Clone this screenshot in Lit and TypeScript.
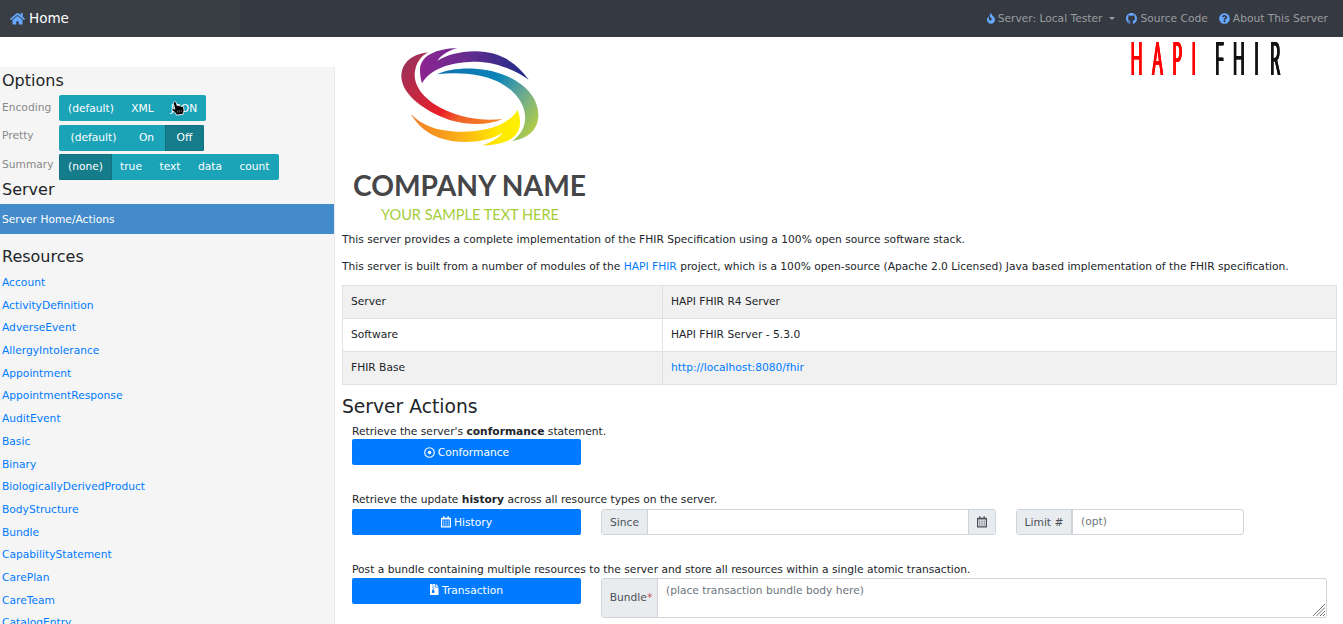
import { LitElement, html, css, svg } from "lit";
import { customElement } from "lit/decorators.js";
import { classMap } from "lit/directives/class-map.js";
import { styleMap } from "lit/directives/style-map.js";

const HOME = "M280.37 148.26L96 300.11V464a16 16 0 0 0 16 16l112.06-.29a16 16 0 0 0 15.92-16V368a16 16 0 0 1 16-16h64a16 16 0 0 1 16 16v95.64a16 16 0 0 0 16 16.05L464 480a16 16 0 0 0 16-16V300L295.67 148.26a12.19 12.19 0 0 0-15.3 0zM571.6 251.47L488 182.56V44.05a12 12 0 0 0-12-12h-56a12 12 0 0 0-12 12v72.61L318.47 43a48 48 0 0 0-61 0L4.34 251.47a12 12 0 0 0-1.6 16.9l25.5 31A12 12 0 0 0 45.15 301l235.22-193.74a12.19 12.19 0 0 1 15.3 0L530.9 301a12 12 0 0 0 16.9-1.6l25.5-31a12 12 0 0 0-1.7-16.93z";
const FIRE = "M216 23.86c0-23.8-30.65-32.77-44.15-13.04C48 191.85 224 200 224 288c0 35.63-29.11 64.46-64.85 63.99-35.17-.45-63.15-29.77-63.15-64.94v-85.51c0-21.7-26.47-32.23-41.43-16.5C27.8 213.16 0 261.33 0 320c0 105.87 86.13 192 192 192s192-86.13 192-192c0-170.29-168-193-168-296.14z";
const GITHUB = "M8 0C3.58 0 0 3.58 0 8c0 3.54 2.29 6.53 5.47 7.59.4.07.55-.17.55-.38 0-.19-.01-.82-.01-1.49-2.01.37-2.53-.49-2.69-.94-.09-.23-.48-.94-.82-1.13-.28-.15-.68-.52-.01-.53.63-.01 1.08.58 1.23.82.72 1.21 1.87.87 2.33.66.07-.52.28-.87.51-1.07-1.78-.2-3.64-.89-3.64-3.95 0-.87.31-1.59.82-2.15-.08-.2-.36-1.02.08-2.12 0 0 .67-.21 2.2.82.64-.18 1.32-.27 2-.27s1.36.09 2 .27c1.53-1.04 2.2-.82 2.2-.82.44 1.1.16 1.92.08 2.12.51.56.82 1.27.82 2.15 0 3.07-1.87 3.75-3.65 3.95.29.25.54.73.54 1.48 0 1.07-.01 1.93-.01 2.2 0 .21.15.46.55.38A8.01 8.01 0 0 0 16 8c0-4.42-3.58-8-8-8z";
const QUESTION = "M504 256c0 136.997-111.043 248-248 248S8 392.997 8 256C8 119.083 119.043 8 256 8s248 111.083 248 248zM262.655 90c-54.497 0-89.255 22.957-116.549 63.758-3.536 5.286-2.353 12.415 2.715 16.258l34.699 26.31c5.205 3.947 12.621 3.008 16.665-2.122 17.864-22.658 30.113-35.797 57.303-35.797 20.429 0 45.698 13.148 45.698 32.958 0 14.976-12.363 22.667-32.534 33.976C247.128 238.528 216 254.941 216 296v4c0 6.627 5.373 12 12 12h56c6.627 0 12-5.373 12-12v-1.333c0-28.462 83.186-29.647 83.186-106.667 0-58.002-60.165-102-116.531-102zM256 338c-25.365 0-46 20.635-46 46 0 25.364 20.635 46 46 46s46-20.636 46-46c0-25.365-20.635-46-46-46z";

const icon = (d: string, box: string, w: number, h: number) =>
  html`<svg class="icon" width=${w} height=${h} viewBox=${box} fill="currentColor"><path d=${d} /></svg>`;

const calendar = html`<svg class="icon" width="10" height="12" viewBox="0 0 10 12" fill="none" stroke="currentColor">
  <path d="M.6 2.300h8.8v8.600H.6z" stroke-width="1.2" stroke-linejoin="round" />
  <path d="M.6 2.700h8.8" stroke-width="1.500" />
  <path d="M2.800.3v2M7.200.3v2" stroke-width="1.300" />
  <path d="M2.200 5.200h1.200M4.400 5.200h1.200M6.600 5.200h1.200M2.200 7.200h1.200M4.400 7.200h1.200M6.600 7.200h1.200M2.200 9.100h1.200M4.400 9.100h1.200M6.600 9.100h1.200" stroke-width="1" />
</svg>`;

const target = html`<svg class="icon" width="11" height="11" viewBox="0 0 11 11">
  <circle cx="5.5" cy="5.5" r="4.8" fill="none" stroke="currentColor" stroke-width="1.1" />
  <circle cx="5.5" cy="5.5" r="1.8" fill="currentColor" />
</svg>`;

const archive = html`<svg class="icon" width="9" height="12" viewBox="0 0 9 12">
  <path fill="currentColor" d="M.5 0h4.8v3.4h3.2v7.1a.6.6 0 0 1-.6.6H.6a.6.6 0 0 1-.6-.6V.5C0 .2.2 0 .5 0zM6 0l2.5 2.700H6z" />
  <path stroke="#007bff" stroke-width=".9" fill="none" d="M2.200 1h1M3.200 2.200h1M2.200 3.400h1M3.200 4.600h1" />
  <path fill="#007bff" d="M2.400 5.400h1.500l.7 2.400a1.400 1.400 0 0 1-2.800 0z" />
</svg>`;

interface Choice { label: string; width: number; active?: boolean }
const OPTIONS: { name: string; height: number; choices: Choice[] }[] = [
  { name: "Encoding", height: 30, choices: [{ label: "(default)", width: 64 }, { label: "XML", width: 39 }, { label: "JSON", width: 44 }] },
  { name: "Pretty", height: 29, choices: [{ label: "(default)", width: 69 }, { label: "On", width: 37 }, { label: "Off", width: 39, active: true }] },
  { name: "Summary", height: 26, choices: [{ label: "(none)", width: 53, active: true }, { label: "true", width: 38 }, { label: "text", width: 40 }, { label: "data", width: 40 }, { label: "count", width: 49 }] },
];

const RESOURCES = [
  "Account", "ActivityDefinition", "AdverseEvent", "AllergyIntolerance", "Appointment",
  "AppointmentResponse", "AuditEvent", "Basic", "Binary", "BiologicallyDerivedProduct",
  "BodyStructure", "Bundle", "CapabilityStatement", "CarePlan", "CareTeam", "CatalogEntry",
];

const base = css`
  * { box-sizing: border-box; }
  a { color: #007bff; text-decoration: none; }
  .icon { flex: none; display: block; }
`;

@customElement("top-bar")
class TopBar extends LitElement {
  static styles = [base, css`
    :host { display: flex; justify-content: space-between; align-items: center; height: 37px; padding: 0 15px 0 10px;
      background: linear-gradient(90deg, #393d44 0 240px, #353941 240px); color: #9a9da0; }
    .brand { display: flex; align-items: center; gap: 4px; font-size: 13.500px; color: #fff; }
    .brand .icon, .link .icon { color: #66a8ff; }
    .links { display: flex; gap: 11px; }
    .link { display: flex; align-items: center; gap: 3px; padding-top: 1px; }
    .link .icon { margin-top: -1px; }
    .caret { margin: -2px 0 0 4px; border: 3.3px solid transparent; border-top-color: currentColor; border-bottom: 0; }
  `];
  render() {
    return html`
      <div class="brand">${icon(HOME, "0 0 576 512", 15, 13.5)}<span>Home</span></div>
      <div class="links">
        <span class="link">${icon(FIRE, "0 0 384 512", 8, 11)}<span>Server: Local Tester</span><span class="caret"></span></span>
        <span class="link">${icon(GITHUB, "0 0 16 16", 11, 11)}<span>Source Code</span></span>
        <span class="link">${icon(QUESTION, "0 0 512 512", 11, 11)}<span>About This Server</span></span>
      </div>`;
  }
}

@customElement("side-nav")
class SideNav extends LitElement {
  static styles = [base, css`
    :host { display: block; width: 334px; flex: none; margin-top: 30px; background: #f5f5f5; border-right: 1px solid #e9e9e9; }
    .title { font-size: 16px; padding-left: 2px; height: 28px; line-height: 28px; white-space: nowrap; }
    .title.server { height: 24px; line-height: 20px; }
    .title.resources { height: 37px; line-height: 46px; }
    .row { display: flex; }
    .name { width: 59px; padding-left: 2px; line-height: 25px; color: #888; }
    .row:nth-of-type(3) .name { line-height: 22px; }
    .row:nth-of-type(4) .name { line-height: 22px; }
    .group { display: flex; height: 26px; border-radius: 2px; overflow: hidden; background: #1ba3b8; color: #fff; }
    .choice { display: flex; align-items: center; justify-content: center; border: 1px solid transparent; }
    .row:nth-of-type(2) .choice { padding-top: 2px; }
    .choice.active { background: #157c8c; border-color: #12707f; }
    .current { display: flex; align-items: center; height: 30px; padding: 2px 0 0 2px; background: #448bcb; color: #fff; }
    .item { display: block; height: 22.700px; line-height: 24.600px; padding-left: 2px; }
    .pointer { position: absolute; left: 171px; top: 100px; }
  `];
  render() {
    return html`
      <div class="title">Options</div>
      ${OPTIONS.map(o => html`<div class="row" style=${styleMap({ height: `${o.height}px` })}>
        <span class="name">${o.name}</span>
        <div class="group">${o.choices.map(c => html`<span class=${classMap({ choice: true, active: !!c.active })}
          style=${styleMap({ width: `${c.width}px` })}>${c.label}</span>`)}</div>
      </div>`)}
      <div class="title server">Server</div>
      <div class="current">Server Home/Actions</div>
      <div class="title resources">Resources</div>
      ${RESOURCES.map(r => html`<a class="item">${r}</a>`)}
      <svg class="pointer" width="15" height="17" viewBox="0 0 16 17">
        <path d="M3 1.500c1-.9 2.200-.2 2.500.8l1.100 3.200 1-.4 1 .7 1.300-.3.8.8 1.400-.1c1 .2 1.400.9 1.500 1.800l.3 3.200-.8 1.600v1.900l-7.500.8-.6-2-3.800-3.200c-.8-.9.2-2.200 1.400-1.700l1.500.7L2.600 3.200C2.400 2.500 2.500 2 3 1.500z" fill="#000" stroke="#fff" stroke-width=".9" />
        <path d="M7 10.500v2.500M9 10.300v2.500M11 10v2.500" stroke="#fff" stroke-width=".4" />
      </svg>`;
  }
}

@customElement("company-logo")
class CompanyLogo extends LitElement {
  static styles = css`
    :host, svg { display: block; }
    .name { font: 700 28px Lato, sans-serif; fill: #464648; }
    .tagline { font: 400 15.500px Lato, sans-serif; fill: #a4cd39; }
  `;
  render() {
    const stops = (list: [string, string][]) => list.map(([o, c]) => svg`<stop offset=${o} stop-color=${c} />`);
    return html`<svg width="250" height="190" viewBox="0 0 250 190">
      <defs>
        <linearGradient id="red" gradientUnits="userSpaceOnUse" x1="220" y1="60" x2="460" y2="260">${stops([["0", "#a03058"], [".55", "#ea1f28"], [".72", "#f0602a"], ["1", "#f58220"]])}</linearGradient>
        <linearGradient id="violet" gradientUnits="userSpaceOnUse" x1="240" y1="0" x2="566" y2="0">${stops([["0", "#8c2490"], [".4", "#6a2c90"], ["1", "#1d2c88"]])}</linearGradient>
        <linearGradient id="blue" gradientUnits="userSpaceOnUse" x1="300" y1="100" x2="580" y2="300">${stops([["0", "#0e72b0"], [".45", "#0b84b8"], [".7", "#68a894"], ["1", "#b8d040"]])}</linearGradient>
        <linearGradient id="gold" gradientUnits="userSpaceOnUse" x1="213" y1="0" x2="540" y2="0">${stops([["0", "#f07c28"], [".45", "#fbb018"], [".8", "#ffe900"], ["1", "#fff000"]])}</linearGradient>
      </defs>
      <g transform="translate(-2 -1) scale(.33333)">
        <path fill="url(#red)" d="M264 49C200 58 178 95 186 135C195 185 270 235 340 255C390 268 445 268 488 249C430 255 370 248 310 220C250 190 215 145 226 100C232 75 245 60 264 49Z" />
        <path fill="url(#violet)" d="M352 36C290 38 242 58 240 100C240 120 243 132 246 142C275 90 350 77 410 77C470 78 530 105 566 131C530 80 480 46 405 46C355 47 320 58 292 74C303 58 325 44 352 36Z" />
        <path fill="url(#blue)" d="M291 115C340 92 430 90 500 120C560 147 597 190 595 242C592 285 560 308 516 315C545 295 562 265 553 225C540 170 480 130 420 119C370 110 330 110 291 115Z" />
        <path fill="url(#gold)" d="M213 234C245 268 290 284 350 287C420 290 500 275 533 222C541 245 543 265 535 285C520 315 480 328 428 328C455 318 478 305 489 290C455 310 420 317 375 318C300 317 245 290 213 234Z" />
      </g>
      <text class="name" x="11" y="158.500" textLength="233" lengthAdjust="spacingAndGlyphs">COMPANY NAME</text>
      <text class="tagline" x="39" y="183" textLength="178" lengthAdjust="spacingAndGlyphs">YOUR SAMPLE TEXT HERE</text>
    </svg>`;
  }
}

@customElement("hapi-logo")
class HapiLogo extends LitElement {
  static styles = css`
    :host, svg { display: block; }
    svg { overflow: visible; }
    .word { font: 400 46px "Open Sans", sans-serif; text-anchor: middle; }
    .red { fill: #f00; filter: drop-shadow(.8px 0 0 #f00) drop-shadow(-.8px 0 0 #f00); }
    .black { fill: #111; filter: drop-shadow(.8px 0 0 #111) drop-shadow(-.8px 0 0 #111); }
  `;
  render() {
    return html`<svg width="160" height="70" viewBox="0 0 160 70">
      <g class="red"><g transform="scale(.36 1)"><text class="word" x="28 86 141 187" y="38">HAPI</text></g></g>
      <g class="black"><g transform="scale(.36 1)"><text class="word" x="258 312 361 413" y="38">FHIR</text></g></g>
    </svg>`;
  }
}

@customElement("server-page")
class ServerPage extends LitElement {
  static styles = [base, css`
    :host { display: block; flex: 1; min-width: 0; padding: 0 6px 0 7px; }
    .logos { display: flex; justify-content: space-between; height: 190px; padding-right: 50px; }
    .para { height: 27px; line-height: 25px; white-space: nowrap; }
    .info { display: grid; grid-template-columns: 320px 1fr; margin-top: 4px; border: 1px solid #dee2e6; border-width: 1px 1px 0 0; }
    .cell { height: 33px; line-height: 31px; padding-left: 8px; border: 1px solid #dee2e6; border-width: 0 0 1px 1px; }
    .cell.odd { background: #f1f1f1; }
    .heading { font-size: 18.700px; height: 36px; line-height: 43px; }
    .action { padding-left: 10px; }
    .caption { height: 18px; line-height: 21px; white-space: nowrap; }
    .caption.later { height: 20px; line-height: 21px; }
    .caption.last { height: 19px; }
    .fields { display: flex; align-items: flex-start; gap: 20px; height: 26px; }
    .fields.spaced { margin-bottom: 24px; }
    .button { display: flex; align-items: center; justify-content: center; gap: 3px; width: 229px; height: 26px; border-radius: 2px; background: #007bff; color: #fff; }
    .spaced .button { padding-top: 2px; }
    .button .icon { margin-top: -2px; }
    .input { display: flex; height: 26px; border: 1px solid #ced4da; border-radius: 3px; color: #495057; background: #fff; }
    .addon { display: flex; align-items: center; justify-content: center; background: #e9ecef; border-right: 1px solid #ced4da; }
    .spaced .addon { padding-top: 2px; }
    .spaced .addon.end { padding-top: 0; }
    .addon.end { border-right: 0; border-left: 1px solid #ced4da; width: 27px; }
    .grow { flex: 1; padding-left: 8px; line-height: 23px; color: #6c757d; }
    .since { width: 395px; } .since .addon:first-child { width: 46px; }
    .limit { width: 228px; } .limit .addon { width: 56px; border-right-width: 2px; }
    .bundle { width: 726px; height: 40px; } .bundle .addon { width: 56px; padding-left: 3px; }
    .bundle .grip { align-self: flex-end; display: block; margin: 0 1px 1px 0; }
    .star { color: #c9555d; }
  `];
  render() {
    return html`
      <div class="logos"><company-logo></company-logo><hapi-logo></hapi-logo></div>
      <div class="para">This server provides a complete implementation of the FHIR Specification using a 100% open source software stack.</div>
      <div class="para">This server is built from a number of modules of the <a>HAPI FHIR</a> project, which is a 100% open-source (Apache 2.0 Licensed) Java based implementation of the FHIR specification.</div>
      <div class="info">
        <div class="cell odd">Server</div><div class="cell odd">HAPI FHIR R4 Server</div>
        <div class="cell">Software</div><div class="cell">HAPI FHIR Server - 5.3.0</div>
        <div class="cell odd">FHIR Base</div><div class="cell odd"><a>http://localhost:8080/fhir</a></div>
      </div>
      <div class="heading">Server Actions</div>
      <div class="action">
        <div class="caption">Retrieve the server's <b>conformance</b> statement.</div>
        <div class="fields spaced"><div class="button">${target}Conformance</div></div>
        <div class="caption later">Retrieve the update <b>history</b> across all resource types on the server.</div>
        <div class="fields spaced">
          <div class="button">${calendar}History</div>
          <div class="input since"><span class="addon">Since</span><span class="grow"></span><span class="addon end">${calendar}</span></div>
          <div class="input limit"><span class="addon">Limit #</span><span class="grow">(opt)</span></div>
        </div>
        <div class="caption later last">Post a bundle containing multiple resources to the server and store all resources within a single atomic transaction.</div>
        <div class="fields">
          <div class="button">${archive}Transaction</div>
          <div class="input bundle"><span class="addon">Bundle<span class="star">*</span></span><span class="grow">(place transaction bundle body here)</span>
            <svg class="grip" width="12" height="12" viewBox="0 0 12 12" stroke="#777" stroke-width="1"><path d="M0 12L12 0M3.500 12L12 3.500M7 12L12 7M10 12L12 10" /></svg></div>
        </div>
      </div>`;
  }
}

@customElement("app-root")
class AppRoot extends LitElement {
  static styles = css`
    :host { display: flex; flex-direction: column; position: relative; height: 624px; overflow: hidden; background: #fff;
      font: 10.680px/1.5 "DejaVu Sans", sans-serif; color: #212529; }
    .body { display: flex; flex: 1; min-height: 0; }
  `;
  render() {
    return html`<top-bar></top-bar><div class="body"><side-nav></side-nav><server-page></server-page></div>`;
  }
}
